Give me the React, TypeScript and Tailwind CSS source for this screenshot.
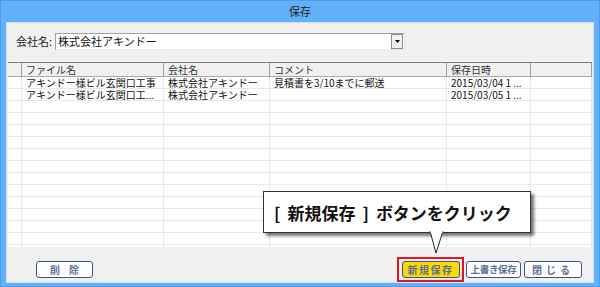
import React from "react";

const font = { fontFamily: '"Noto Sans CJK JP", "Noto Sans", sans-serif' };

type Col = { label: string; width: string };

const columns: Col[] = [
  { label: "", width: "w-[14px]" },
  { label: "ファイル名", width: "w-[142px]" },
  { label: "会社名", width: "w-[106px]" },
  { label: "コメント", width: "w-[177px]" },
  { label: "保存日時", width: "w-[84px]" },
  { label: "", width: "flex-1" },
];

const rows: string[][] = [
  ["", "アキンドー様ビル玄関口工事", "株式会社アキンドー", "見積書を3/10までに郵送", "2015/03/04 1 ...", ""],
  ["", "アキンドー様ビル玄関口工...", "株式会社アキンドー", "", "2015/03/05 1 ...", ""],
];

const emptyRows = Array.from({ length: 13 }, () => ["", "", "", "", "", ""]);

function DataGrid() {
  const all = [...rows, ...emptyRows];
  return (
    <div className="mx-px mt-[12px] flex h-[185px] flex-col overflow-hidden border-t border-[#7a7a7a] bg-white">
      <div className="flex h-[14px] shrink-0 border-b border-[#a8a8a8] bg-[#f0f0f0]">
        {columns.map((c, i) => (
          <div
            key={i}
            className={`${c.width} flex shrink-0 items-center overflow-hidden border-r border-[#a0a0a0] pl-[4px] text-[10px] leading-[12px] text-[#333]`}
          >
            {c.label}
          </div>
        ))}
      </div>
      {all.map((r, ri) => (
        <div key={ri} className="flex h-[12px] shrink-0 border-b border-[#e8e8e8]">
          {r.map((cell, ci) => (
            <div
              key={ci}
              className={`${columns[ci].width} flex shrink-0 items-center overflow-hidden whitespace-nowrap border-r border-[#e8e8e8] pl-[4px] text-[10px] leading-[11px] text-[#111]`}
            >
              {cell}
            </div>
          ))}
        </div>
      ))}
    </div>
  );
}

function PanelButton({
  children,
  className = "",
}: {
  children: React.ReactNode;
  className?: string;
}) {
  return (
    <div
      className={`flex h-[17px] items-center justify-center overflow-hidden whitespace-nowrap rounded-[3px] border-[1.5px] border-[#34548f] font-bold leading-none text-[#5a6f99] ${className}`}
    >
      {children}
    </div>
  );
}

export default function App() {
  return (
    <div
      className="relative flex h-[287px] w-[600px] flex-col overflow-hidden border border-[#4d9be4] bg-[#62b0f7]"
      style={font}
    >
      <div className="flex h-[21px] shrink-0 items-center justify-center text-[11px] text-[#222]">
        保存
      </div>

      <div className="mx-[5px] mb-[6px] flex flex-1 flex-col border border-[#cfe2f4] bg-[#f0f0f0]">
        <div className="mt-[10px] flex items-center pl-[9px]">
          <span className="text-[11px] leading-none text-[#222]">会社名:</span>
          <div className="ml-[3px] flex h-[17px] w-[350px] items-center border border-t-[#a0a0a0] border-l-[#a0a0a0] border-r-[#e6e6e6] border-b-[#e6e6e6] bg-white">
            <span className="flex-1 pl-[2px] text-[11px] leading-none text-[#111]">
              株式会社アキンドー
            </span>
            <div className="mr-px flex h-[15px] w-[12px] items-center justify-center border border-[#8a8a8a] bg-[#f0f0f0]">
              <svg width="5" height="3" viewBox="0 0 5 3">
                <path d="M0 0h5L2.5 3z" fill="#000" />
              </svg>
            </div>
          </div>
        </div>

        <DataGrid />

        <div className="mt-[10px] flex items-center">
          <PanelButton className="ml-[29px] w-[57px] bg-white pl-[0.9em] text-[10px] tracking-[0.9em]">
            削除
          </PanelButton>
          <div className="flex-1" />
          <div className="mr-[2px] flex h-[25px] w-[67px] items-center justify-center border-2 border-[#e8141b]">
            <PanelButton className="w-[58px] bg-[#ffd900] text-[10px] tracking-[0.15em] text-[#4a5a70]">
              新規保存
            </PanelButton>
          </div>
          <PanelButton className="w-[55px] bg-white text-[9.5px] tracking-[-0.3px]">
            上書き保存
          </PanelButton>
          <PanelButton className="ml-[3px] mr-[11px] w-[58px] bg-white text-[10px] tracking-[0.4em]">
            閉じる
          </PanelButton>
        </div>
      </div>

      <div className="absolute left-[262px] top-[190px] flex h-[42px] w-[268px] items-center border border-[#333] bg-white pl-[10px] shadow-[3px_3px_3px_rgba(0,0,0,0.55)]">
        <span className="whitespace-nowrap text-[17px] font-bold leading-none text-[#111]">
          <span className="mr-[7px]">[</span>
          新規保存
          <span className="ml-[7px] mr-[7px]">]</span>
          ボタンをクリック
        </span>
      </div>
      <svg
        className="absolute left-[428px] top-[230px]"
        width="16"
        height="24"
        viewBox="0 0 16 24"
      >
        <path d="M1 0 L7 22 L14 0" fill="#fff" stroke="#222" strokeWidth="1" />
        <path d="M1.5 0 L13.5 0 L13.5 2 L1.5 2 z" fill="#fff" />
      </svg>
    </div>
  );
}
